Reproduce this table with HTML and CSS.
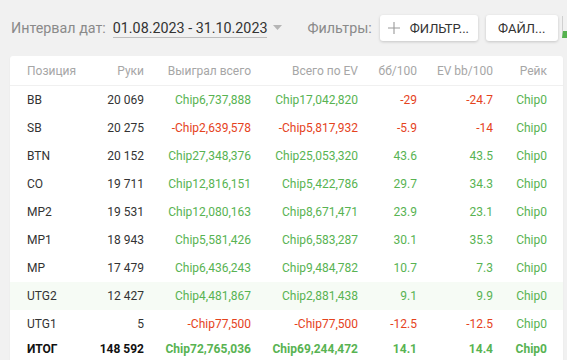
FILE: index.html
```html
<!DOCTYPE html>
<html lang="ru">

<head>
	<meta charset="UTF-8">
	<meta name="viewport" content="width=device-width, initial-scale=1.0">
	<title>Статистика по позициям</title>
	<link rel="stylesheet" href="styles.css">
</head>

<body>
	<div class="toolbar">
		<span class="label">Интервал дат:</span>
		<span class="date-range">01.08.2023 - 31.10.2023</span>
		<svg class="caret" width="9" height="5" viewBox="0 0 9 5"><path d="M0 0h9L4.5 5z" fill="#b5b5b5" /></svg>
		<span class="label filters-label">Фильтры:</span>
		<button type="button" class="tool-btn add-btn">
			<svg width="12" height="12" viewBox="0 0 12 12"><path d="M6 0v12M0 6h12" stroke="#9a9a9a" stroke-width="1.1" /></svg>
			ФИЛЬТР...
		</button>
		<button type="button" class="tool-btn">ФАЙЛ...</button>
		<div class="cut-off"></div>
	</div>

	<div class="card">
		<div class="row head">
			<div class="name">Позиция</div>
			<div>Руки</div>
			<div>Выиграл всего</div>
			<div>Всего по EV</div>
			<div>бб/100</div>
			<div>EV bb/100</div>
			<div>Рейк</div>
		</div>
		<div class="row">
			<div class="name">BB</div>
			<div>20 069</div>
			<div class="up">Chip6,737,888</div>
			<div class="up">Chip17,042,820</div>
			<div class="down">-29</div>
			<div class="down">-24.7</div>
			<div class="up">Chip0</div>
		</div>
		<div class="row">
			<div class="name">SB</div>
			<div>20 275</div>
			<div class="down">-Chip2,639,578</div>
			<div class="down">-Chip5,817,932</div>
			<div class="down">-5.9</div>
			<div class="down">-14</div>
			<div class="up">Chip0</div>
		</div>
		<div class="row">
			<div class="name">BTN</div>
			<div>20 152</div>
			<div class="up">Chip27,348,376</div>
			<div class="up">Chip25,053,320</div>
			<div class="up">43.6</div>
			<div class="up">43.5</div>
			<div class="up">Chip0</div>
		</div>
		<div class="row">
			<div class="name">CO</div>
			<div>19 711</div>
			<div class="up">Chip12,816,151</div>
			<div class="up">Chip5,422,786</div>
			<div class="up">29.7</div>
			<div class="up">34.3</div>
			<div class="up">Chip0</div>
		</div>
		<div class="row">
			<div class="name">MP2</div>
			<div>19 531</div>
			<div class="up">Chip12,080,163</div>
			<div class="up">Chip8,671,471</div>
			<div class="up">23.9</div>
			<div class="up">23.1</div>
			<div class="up">Chip0</div>
		</div>
		<div class="row">
			<div class="name">MP1</div>
			<div>18 943</div>
			<div class="up">Chip5,581,426</div>
			<div class="up">Chip6,583,287</div>
			<div class="up">30.1</div>
			<div class="up">35.3</div>
			<div class="up">Chip0</div>
		</div>
		<div class="row">
			<div class="name">MP</div>
			<div>17 479</div>
			<div class="up">Chip6,436,243</div>
			<div class="up">Chip9,484,782</div>
			<div class="up">10.7</div>
			<div class="up">7.3</div>
			<div class="up">Chip0</div>
		</div>
		<div class="row hovered">
			<div class="name">UTG2</div>
			<div>12 427</div>
			<div class="up">Chip4,481,867</div>
			<div class="up">Chip2,881,438</div>
			<div class="up">9.1</div>
			<div class="up">9.9</div>
			<div class="up">Chip0</div>
		</div>
		<div class="row">
			<div class="name">UTG1</div>
			<div>5</div>
			<div class="down">-Chip77,500</div>
			<div class="down">-Chip77,500</div>
			<div class="down">-12.5</div>
			<div class="down">-12.5</div>
			<div class="up">Chip0</div>
		</div>
		<div class="row total">
			<div class="name">ИТОГ</div>
			<div>148 592</div>
			<div class="up">Chip72,765,036</div>
			<div class="up">Chip69,244,472</div>
			<div class="up">14.1</div>
			<div class="up">14.4</div>
			<div class="up">Chip0</div>
		</div>
	</div>
</body>

</html>
```

FILE: styles.css
```css
* {
	box-sizing: border-box;
}

body {
	font-family: Roboto, 'Liberation Sans', sans-serif;
	background-color: #f1f1f1;
	margin: 0;
	overflow: hidden;
	color: #333;
}

.toolbar {
	display: flex;
	align-items: center;
	height: 56px;
	padding-left: 11px;
	font-size: 14.3px;
	white-space: nowrap;
}

.toolbar > * {
	flex: none;
}

.label {
	color: #8a8a8a;
}

.date-range {
	margin-left: 7px;
	color: #333;
	line-height: 18px;
	border-bottom: 1px solid #bdbdbd;
}

.caret {
	margin-left: 6px;
	margin-top: -1px;
}

.filters-label {
	margin-left: 25px;
}

.tool-btn {
	display: flex;
	align-items: center;
	gap: 10px;
	height: 26px;
	margin-left: 8px;
	padding: 0 13px 0 12px;
	font-family: inherit;
	font-size: 13px;
	color: #333;
	background-color: #fff;
	border: none;
	border-radius: 3px;
	box-shadow: 0 1px 3px rgba(0, 0, 0, 0.18);
	cursor: pointer;
}

.add-btn {
	margin-left: 8px;
	padding: 0 9px 0 8px;
}

.cut-off {
	width: 8px;
	height: 22px;
	margin-left: 4px;
	margin-top: -2px;
	border-left: 1px solid #d0d0d0;
	border-bottom: 7px solid #56b24f;
}

.card {
	margin: 0 4px 0 10px;
	background-color: #fff;
	border-radius: 3px 3px 0 0;
	box-shadow: 0 1px 2px rgba(0, 0, 0, 0.06);
}

.row {
	display: grid;
	grid-template-columns: 60px 57px 107px 107px 59px 76px 54px;
	align-items: center;
	height: 28px;
	padding: 0 16px 0 17px;
	font-size: 12px;
	text-align: right;
}

.row .name {
	text-align: left;
}

.head {
	height: 30px;
	color: #a6a6a6;
	border-bottom: 1px solid #f0f0f0;
}

.hovered {
	background-color: #f6fbf5;
}

.total {
	height: 22px;
	font-weight: 700;
	color: #111;
}

.up {
	color: #58b352;
}

.down {
	color: #e5431d;
}
```
